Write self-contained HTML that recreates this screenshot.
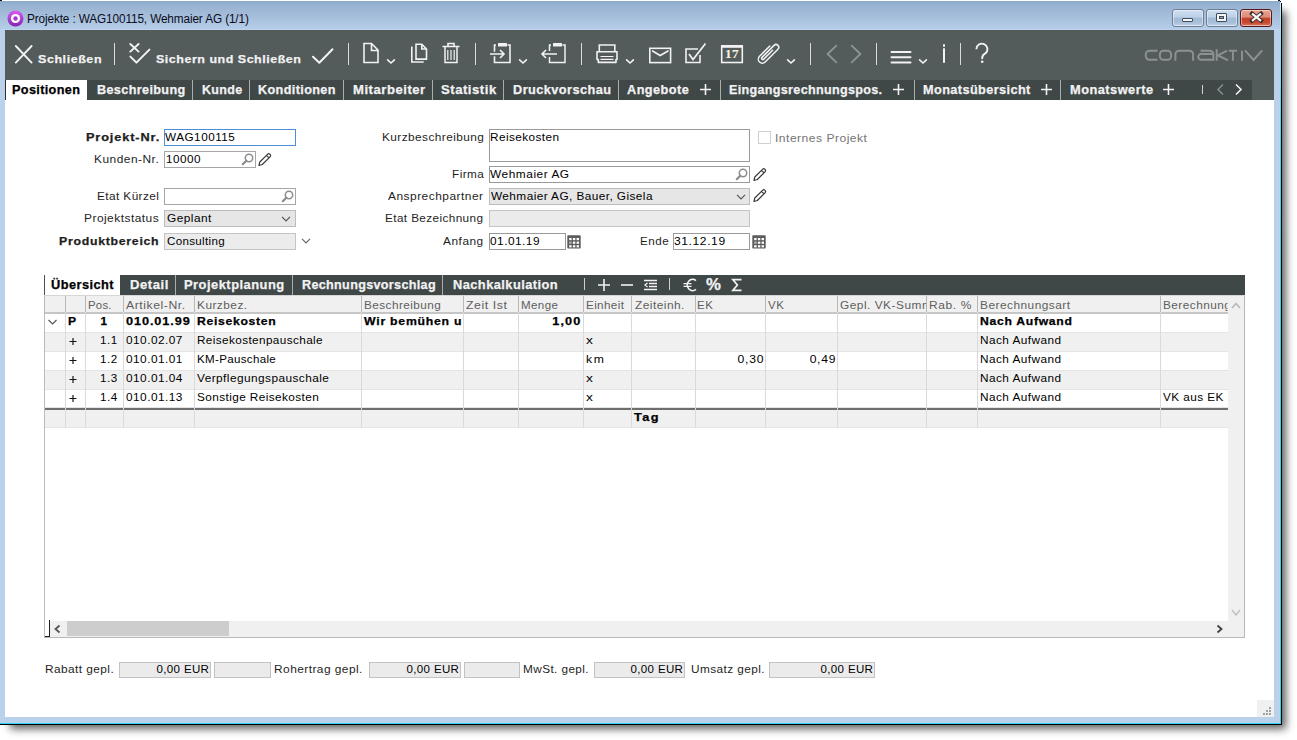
<!DOCTYPE html>
<html><head><meta charset="utf-8"><style>
html,body{margin:0;padding:0;}
body{width:1297px;height:740px;position:relative;overflow:hidden;background:#fff;font-family:"Liberation Sans",sans-serif;}
.r{position:absolute;display:block;}
.t{position:absolute;white-space:nowrap;}
</style></head><body>
<div class="r" style="left:0px;top:1px;width:1282px;height:724px;background:#b9d1ea;box-shadow:7px 7px 8px -3px rgba(0,0,0,.62);"></div>
<div class="r" style="left:1281px;top:1px;width:1px;height:724px;background:#000"></div>
<div class="r" style="left:0px;top:724px;width:1282px;height:1px;background:#000"></div>
<div class="r" style="left:1280px;top:1px;width:1px;height:723px;background:linear-gradient(#c4eef8 0px,#8ee0f6 30px,#45d6f5 120px,#2fd3f3 300px)"></div>
<div class="r" style="left:0px;top:723px;width:1281px;height:1px;background:#2fd3f3"></div>
<div class="r" style="left:0px;top:1px;width:1280px;height:29px;background:linear-gradient(#8ba7c7 0px,#95b0cf 2px,#a3bcd9 14px,#b5cde8 28px,#c3d9ef 29px)"></div>
<div class="r" style="left:0px;top:0px;width:2px;height:1px;background:#111"></div>
<div class="r" style="left:1281px;top:1px;width:1px;height:2px;background:#fff"></div>
<div class="r" style="left:1278px;top:0px;width:2px;height:1px;background:#111"></div>
<div class="r" style="left:1280px;top:1px;width:1px;height:1px;background:#111"></div>
<svg class="r" style="left:7px;top:10px;" width="17" height="17" viewBox="0 0 17 17"><defs><linearGradient id="gi" x1="0" y1="0" x2="0" y2="1"><stop offset="0" stop-color="#d65cf2"/><stop offset="1" stop-color="#8a22b0"/></linearGradient></defs><circle cx="8.5" cy="8.5" r="8" fill="url(#gi)"/><circle cx="8.5" cy="8.5" r="4.6" fill="#fff"/><circle cx="8.5" cy="8.5" r="2.2" fill="#a838c8"/></svg>
<div class="t" style="top:12.84px;font-size:12px;line-height:12px;letter-spacing:-0.116px;color:#0b0b20;left:26.50px;transform-origin:0 0;transform:scaleX(0.9812);">Projekte : WAG100115, Wehmaier AG (1/1)</div>
<div class="r" style="left:1172px;top:9px;width:30px;height:16px;border:1px solid #6d7f96;border-radius:3px;background:linear-gradient(#cfdff0 0%,#bcd0e6 45%,#a2bbd6 50%,#a8c0da 80%,#c4d6ea 100%);box-shadow:inset 0 0 0 1px rgba(255,255,255,.45)"></div>
<div class="r" style="left:1206px;top:9px;width:30px;height:16px;border:1px solid #6d7f96;border-radius:3px;background:linear-gradient(#cfdff0 0%,#bcd0e6 45%,#a2bbd6 50%,#a8c0da 80%,#c4d6ea 100%);box-shadow:inset 0 0 0 1px rgba(255,255,255,.45)"></div>
<div class="r" style="left:1240px;top:9px;width:30px;height:16px;border:1px solid #5a1a1a;border-radius:3px;background:linear-gradient(#e8a594 0%,#dd8c78 45%,#c2412a 50%,#c94a30 80%,#d9806a 100%);box-shadow:inset 0 0 0 1px rgba(255,255,255,.45)"></div>
<div class="r" style="left:1182px;top:18px;width:11px;height:4px;background:#f4f6f8;border:1px solid #404a58;box-sizing:border-box;border-radius:1px"></div>
<div class="r" style="left:1216px;top:13px;width:11px;height:9px;background:#f4f6f8;border:1px solid #404a58;box-sizing:border-box;border-radius:1px"></div>
<div class="r" style="left:1219px;top:16px;width:5px;height:3px;background:#8da6c2;border:1px solid #404a58;box-sizing:border-box"></div>
<svg class="r" style="left:1249px;top:11px;" width="15" height="13" viewBox="0 0 15 13"><path d="M3 2.6 L12 9.8 M12 2.6 L3 9.8" stroke="#3a2a2a" stroke-width="4" stroke-linecap="square"/><path d="M3 2.6 L12 9.8 M12 2.6 L3 9.8" stroke="#fafafa" stroke-width="2.3" stroke-linecap="butt"/></svg>
<div class="r" style="left:5px;top:30px;width:1269px;height:50px;background:#535b5b"></div>
<div class="r" style="left:5px;top:80px;width:1247px;height:20px;background:#3f4747"></div>
<div class="r" style="left:1252px;top:80px;width:22px;height:20px;background:#535b5b"></div>
<div class="r" style="left:5px;top:100px;width:1269px;height:617px;background:#fff"></div>
<svg class="r" style="left:14px;top:44px;" width="20" height="21" viewBox="0 0 20 21"><path d="M1.8 2 L17.6 18.6 M17.6 2 L1.8 18.6" stroke="#f2f2f2" stroke-width="1.9" fill="none" stroke-linecap="round"/></svg>
<div class="t" style="top:54.07px;font-size:11.5px;line-height:11.5px;font-weight:bold;-webkit-text-stroke:0.25px #f2f2f2;letter-spacing:0.529px;color:#f2f2f2;left:37.50px;transform-origin:0 0;transform:scaleX(1.0845);">Schließen</div>
<div class="r" style="left:114px;top:43px;width:1px;height:22px;background:#d8dcdc"></div>
<svg class="r" style="left:128px;top:42px;" width="24" height="23" viewBox="0 0 24 23"><path d="M2.3 2 L10.6 9.6 M10.6 2 L2.3 9.6" stroke="#f2f2f2" stroke-width="1.9" fill="none" stroke-linecap="round"/><path d="M2.4 14.6 L8.4 20.6 L21.4 7.6" stroke="#f2f2f2" stroke-width="2" fill="none" stroke-linecap="round" stroke-linejoin="round"/></svg>
<div class="t" style="top:54.07px;font-size:11.5px;line-height:11.5px;font-weight:bold;-webkit-text-stroke:0.25px #f2f2f2;letter-spacing:0.483px;color:#f2f2f2;left:155.50px;transform-origin:0 0;transform:scaleX(1.0844);">Sichern und Schließen</div>
<svg class="r" style="left:311px;top:47px;" width="24" height="18" viewBox="0 0 24 18"><path d="M2 9.7 L8.3 15.7 L21.5 2.3" stroke="#f2f2f2" stroke-width="2" fill="none" stroke-linecap="round" stroke-linejoin="round"/></svg>
<div class="r" style="left:348px;top:43px;width:1px;height:22px;background:#d8dcdc"></div>
<svg class="r" style="left:362px;top:42px;" width="18" height="23" viewBox="0 0 18 23"><path d="M2 1.5 H9.5 L16 8 V20.5 H2 Z M9.5 1.5 V8.5 H16" stroke="#f2f2f2" stroke-width="1.6" fill="none" stroke-linejoin="miter"/></svg>
<svg class="r" style="left:386px;top:58px;" width="10" height="7" viewBox="0 0 10 7"><path d="M1.6 1.8 L5 5 L8.4 1.8" stroke="#f2f2f2" stroke-width="1.6" fill="none" stroke-linecap="round"/></svg>
<svg class="r" style="left:408px;top:42px;" width="22" height="23" viewBox="0 0 22 23"><path d="M8 2.3 H13.8 L18.5 7 V17.1 H8 Z M13.8 2.3 V7 H18.5" stroke="#f2f2f2" stroke-width="1.6" fill="none"/><path d="M3.8 4.5 V20 H15.7" stroke="#f2f2f2" stroke-width="1.6" fill="none"/></svg>
<svg class="r" style="left:441px;top:42px;" width="20" height="23" viewBox="0 0 20 23"><path d="M1.5 4.5 H18.5 M7 4.5 V1.5 H13 V4.5" stroke="#f2f2f2" stroke-width="1.6" fill="none"/><path d="M4 5 V20.5 H16 V5" stroke="#f2f2f2" stroke-width="1.5" fill="none"/><path d="M6.8 8 V18 M10 8 V18 M13.2 8 V18" stroke="#f2f2f2" stroke-width="1.2" fill="none"/></svg>
<div class="r" style="left:475px;top:43px;width:1px;height:22px;background:#d8dcdc"></div>
<svg class="r" style="left:489px;top:42px;" width="24" height="23" viewBox="0 0 24 23"><path d="M7 3 H5.5 V9.8 M5.5 14.2 V20.5 H21 V3 H18.5" stroke="#f2f2f2" stroke-width="1.6" fill="none"/><rect x="9" y="1" width="9" height="3.5" rx="0.5" fill="#f2f2f2"/><path d="M1 12 H15 M11 8 L15 12 L11 16" stroke="#f2f2f2" stroke-width="1.6" fill="none"/></svg>
<svg class="r" style="left:518px;top:58px;" width="10" height="7" viewBox="0 0 10 7"><path d="M1.6 1.8 L5 5 L8.4 1.8" stroke="#f2f2f2" stroke-width="1.6" fill="none" stroke-linecap="round"/></svg>
<svg class="r" style="left:540px;top:42px;" width="27" height="23" viewBox="0 0 27 23"><path d="M11 3 H9.5 V9 M9.5 15 V20.5 H25 V3 H22.5" stroke="#f2f2f2" stroke-width="1.5" fill="none"/><rect x="13" y="1" width="9" height="3.5" rx="0.5" fill="#f2f2f2"/><path d="M17 12 H2 M6 8 L2 12 L6 16" stroke="#f2f2f2" stroke-width="1.6" fill="none"/></svg>
<div class="r" style="left:581px;top:43px;width:1px;height:22px;background:#d8dcdc"></div>
<svg class="r" style="left:595px;top:42px;" width="25" height="23" viewBox="0 0 25 23"><path d="M4.3 10 V3 H19.8 V10" stroke="#f2f2f2" stroke-width="1.6" fill="none"/><path d="M2 9.8 H22 V17.5 H21 V20.4 H3.3 V17.5 H2 Z" stroke="#f2f2f2" stroke-width="1.6" fill="none" stroke-linejoin="round"/><path d="M5.5 14.5 H18.5 M5.5 17.4 H18.5" stroke="#f2f2f2" stroke-width="1.2"/></svg>
<svg class="r" style="left:625px;top:58px;" width="10" height="7" viewBox="0 0 10 7"><path d="M1.6 1.8 L5 5 L8.4 1.8" stroke="#f2f2f2" stroke-width="1.6" fill="none" stroke-linecap="round"/></svg>
<svg class="r" style="left:648px;top:46px;" width="24" height="19" viewBox="0 0 24 19"><rect x="1.8" y="2.3" width="20.8" height="14.3" stroke="#f2f2f2" stroke-width="1.6" fill="none"/><path d="M4.5 5 L12.2 9.5 L20 5" stroke="#f2f2f2" stroke-width="1.6" fill="none" stroke-linecap="round"/></svg>
<svg class="r" style="left:684px;top:42px;" width="24" height="23" viewBox="0 0 24 23"><path d="M14 7 H2 V20.5 H16 V13" stroke="#f2f2f2" stroke-width="1.6" fill="none"/><path d="M5 12 L9 17.5 L21.5 1.5" stroke="#f2f2f2" stroke-width="1.7" fill="none"/></svg>
<svg class="r" style="left:720px;top:44px;" width="24" height="21" viewBox="0 0 24 21"><rect x="1.7" y="1.8" width="20.6" height="16.7" stroke="#f2f2f2" stroke-width="1.6" fill="none"/><rect x="1" y="1" width="22" height="2.8" fill="#f2f2f2"/><text x="11.7" y="13.9" text-anchor="middle" font-family="Liberation Serif" font-weight="bold" font-size="12.5" fill="#f6f0dc" textLength="14" lengthAdjust="spacingAndGlyphs">17</text></svg>
<svg class="r" style="left:755px;top:42px;" width="26" height="23" viewBox="0 0 26 23"><g transform="translate(13.3 11.2) rotate(45) translate(-4 -13.6)"><path d="M5 8.5 V21 A1.25 1.25 0 0 1 2.5 21 V4 A2.75 2.75 0 0 1 8 4 V22 A4 4 0 0 1 0 22 V7.5" stroke="#f2f2f2" stroke-width="1.5" fill="none" stroke-linecap="round"/></g></svg>
<svg class="r" style="left:786px;top:58px;" width="10" height="7" viewBox="0 0 10 7"><path d="M1.6 1.8 L5 5 L8.4 1.8" stroke="#f2f2f2" stroke-width="1.6" fill="none" stroke-linecap="round"/></svg>
<div class="r" style="left:810px;top:43px;width:1px;height:22px;background:#d8dcdc"></div>
<svg class="r" style="left:825px;top:44px;" width="14" height="20" viewBox="0 0 14 20"><path d="M11.3 1.6 L2.6 10 L11.3 18.4" stroke="#8d9595" stroke-width="1.8" fill="none" stroke-linecap="round"/></svg>
<svg class="r" style="left:849px;top:44px;" width="14" height="20" viewBox="0 0 14 20"><path d="M2.7 1.6 L11.4 10 L2.7 18.4" stroke="#8d9595" stroke-width="1.8" fill="none" stroke-linecap="round"/></svg>
<div class="r" style="left:876px;top:43px;width:1px;height:22px;background:#d8dcdc"></div>
<svg class="r" style="left:890px;top:49px;" width="22" height="16" viewBox="0 0 22 16"><path d="M1.5 3 H20.5 M1.5 8.2 H20.5 M1.5 13.4 H20.5" stroke="#f2f2f2" stroke-width="2" fill="none" stroke-linecap="round"/></svg>
<svg class="r" style="left:918px;top:58px;" width="10" height="7" viewBox="0 0 10 7"><path d="M1.6 1.8 L5 5 L8.4 1.8" stroke="#f2f2f2" stroke-width="1.6" fill="none" stroke-linecap="round"/></svg>
<div class="r" style="left:942.5px;top:44px;width:2.0px;height:2.5px;background:#f2f2f2;border-radius:1px"></div>
<div class="r" style="left:942.5px;top:48px;width:2.0px;height:15px;background:#f2f2f2;border-radius:1px"></div>
<div class="r" style="left:960px;top:43px;width:1px;height:22px;background:#d8dcdc"></div>
<svg class="r" style="left:973px;top:42px;" width="18" height="22" viewBox="0 0 18 22"><path d="M3.4 7.2 A5.5 5.5 0 1 1 12.6 11.2 Q9.2 13 9.2 16 V17" stroke="#f2f2f2" stroke-width="1.9" fill="none"/><circle cx="9.2" cy="19.8" r="1.3" fill="#f2f2f2"/></svg>
<svg class="r" style="left:1140px;top:44px;" width="126" height="22" viewBox="0 0 126 22"><g stroke="#8c9292" stroke-width="1.95" fill="none"><path d="M17.5 6.7 H9.6 A3.8 3.8 0 0 0 5.8 10.5 V12 A3.8 3.8 0 0 0 9.6 15.8 H17.5"/><rect x="19.9" y="6.7" width="11.2" height="9.1" rx="3.6"/><path d="M35.4 16.7 V10.5 A3.8 3.8 0 0 1 39.2 6.7 H49.3 A3.8 3.8 0 0 1 53.1 10.5 V16.7"/><path d="M60.5 6.7 H69.6 A3.8 3.8 0 0 1 73.4 10.5 V15.8 H62 A3.6 3.6 0 0 1 58.2 12.8 A3.2 3.2 0 0 1 62 9.9 H73.4"/><path d="M76.7 5.2 V16.7 M87 6.6 L78 11.4 L88 16.4"/><path d="M88.8 6.7 H97 M92.9 6.7 V16.7"/><path d="M102 6.7 V16.7"/><path d="M105 6.4 L113.6 16 L122.2 6.4"/></g></svg>
<div class="r" style="left:6px;top:80px;width:81px;height:20px;background:#fff"></div>
<div class="r" style="left:5px;top:80px;width:1px;height:20px;background:#2b3131"></div>
<div class="t" style="top:83.84px;font-size:12px;line-height:12px;font-weight:bold;-webkit-text-stroke:0.25px #000;letter-spacing:0.346px;color:#000;left:12.00px;transform-origin:0 0;transform:scaleX(1.0535);">Positionen</div>
<div class="t" style="top:83.84px;font-size:12px;line-height:12px;font-weight:bold;-webkit-text-stroke:0.25px #f2f2f2;letter-spacing:0.354px;color:#f2f2f2;left:96.50px;transform-origin:0 0;transform:scaleX(1.0511);">Beschreibung</div>
<div class="t" style="top:83.84px;font-size:12px;line-height:12px;font-weight:bold;-webkit-text-stroke:0.25px #f2f2f2;letter-spacing:0.345px;color:#f2f2f2;left:201.80px;transform-origin:0 0;transform:scaleX(1.0384);">Kunde</div>
<div class="t" style="top:83.84px;font-size:12px;line-height:12px;font-weight:bold;-webkit-text-stroke:0.25px #f2f2f2;letter-spacing:0.357px;color:#f2f2f2;left:258.10px;transform-origin:0 0;transform:scaleX(1.0537);">Konditionen</div>
<div class="t" style="top:83.84px;font-size:12px;line-height:12px;font-weight:bold;-webkit-text-stroke:0.25px #f2f2f2;letter-spacing:0.498px;color:#f2f2f2;left:352.50px;transform-origin:0 0;transform:scaleX(1.0884);">Mitarbeiter</div>
<div class="t" style="top:83.84px;font-size:12px;line-height:12px;font-weight:bold;-webkit-text-stroke:0.25px #f2f2f2;letter-spacing:0.488px;color:#f2f2f2;left:441.10px;transform-origin:0 0;transform:scaleX(1.0912);">Statistik</div>
<div class="t" style="top:83.84px;font-size:12px;line-height:12px;font-weight:bold;-webkit-text-stroke:0.25px #f2f2f2;letter-spacing:0.417px;color:#f2f2f2;left:512.50px;transform-origin:0 0;transform:scaleX(1.0608);">Druckvorschau</div>
<div class="t" style="top:83.84px;font-size:12px;line-height:12px;font-weight:bold;-webkit-text-stroke:0.25px #f2f2f2;letter-spacing:0.436px;color:#f2f2f2;left:627.40px;transform-origin:0 0;transform:scaleX(1.0584);">Angebote</div>
<div class="t" style="top:83.84px;font-size:12px;line-height:12px;font-weight:bold;-webkit-text-stroke:0.25px #f2f2f2;letter-spacing:0.310px;color:#f2f2f2;left:729.40px;transform-origin:0 0;transform:scaleX(1.0464);">Eingangsrechnungspos.</div>
<div class="t" style="top:83.84px;font-size:12px;line-height:12px;font-weight:bold;-webkit-text-stroke:0.25px #f2f2f2;letter-spacing:0.381px;color:#f2f2f2;left:922.90px;transform-origin:0 0;transform:scaleX(1.0588);">Monatsübersicht</div>
<div class="t" style="top:83.84px;font-size:12px;line-height:12px;font-weight:bold;-webkit-text-stroke:0.25px #f2f2f2;letter-spacing:0.453px;color:#f2f2f2;left:1070.00px;transform-origin:0 0;transform:scaleX(1.0658);">Monatswerte</div>
<div class="r" style="left:192px;top:80px;width:1px;height:20px;background:#a8acac"></div>
<div class="r" style="left:249px;top:80px;width:1px;height:20px;background:#a8acac"></div>
<div class="r" style="left:343px;top:80px;width:1px;height:20px;background:#a8acac"></div>
<div class="r" style="left:432px;top:80px;width:1px;height:20px;background:#a8acac"></div>
<div class="r" style="left:503px;top:80px;width:1px;height:20px;background:#a8acac"></div>
<div class="r" style="left:618px;top:80px;width:1px;height:20px;background:#a8acac"></div>
<div class="r" style="left:720px;top:80px;width:1px;height:20px;background:#a8acac"></div>
<div class="r" style="left:914px;top:80px;width:1px;height:20px;background:#a8acac"></div>
<div class="r" style="left:1060px;top:80px;width:1px;height:20px;background:#a8acac"></div>
<svg class="r" style="left:699px;top:83px;" width="13" height="13" viewBox="0 0 13 13"><path d="M6.5 1 V12 M1 6.5 H12" stroke="#f2f2f2" stroke-width="1.6"/></svg>
<svg class="r" style="left:892px;top:83px;" width="13" height="13" viewBox="0 0 13 13"><path d="M6.5 1 V12 M1 6.5 H12" stroke="#f2f2f2" stroke-width="1.6"/></svg>
<svg class="r" style="left:1040px;top:83px;" width="13" height="13" viewBox="0 0 13 13"><path d="M6.5 1 V12 M1 6.5 H12" stroke="#f2f2f2" stroke-width="1.6"/></svg>
<svg class="r" style="left:1162px;top:83px;" width="13" height="13" viewBox="0 0 13 13"><path d="M6.5 1 V12 M1 6.5 H12" stroke="#f2f2f2" stroke-width="1.6"/></svg>
<div class="r" style="left:1202px;top:85px;width:1px;height:9px;background:#d0d0d0"></div>
<svg class="r" style="left:1215px;top:83px;" width="10" height="13" viewBox="0 0 10 13"><path d="M8 1.5 L3 6.5 L8 11.5" stroke="#888e8e" stroke-width="1.5" fill="none"/></svg>
<svg class="r" style="left:1234px;top:83px;" width="10" height="13" viewBox="0 0 10 13"><path d="M2 1.5 L7 6.5 L2 11.5" stroke="#f2f2f2" stroke-width="1.6" fill="none"/></svg>
<div class="t" style="top:131.69px;font-size:11px;line-height:11px;font-weight:bold;-webkit-text-stroke:0.25px #1e1e1e;letter-spacing:0.759px;color:#1e1e1e;left:85.50px;transform-origin:0 0;transform:scaleX(1.1579);">Projekt-Nr.</div>
<div class="t" style="top:153.69px;font-size:11px;line-height:11px;letter-spacing:0.465px;color:#1e1e1e;left:94.00px;transform-origin:0 0;transform:scaleX(1.0813);">Kunden-Nr.</div>
<div class="t" style="top:190.69px;font-size:11px;line-height:11px;letter-spacing:0.376px;color:#1e1e1e;left:96.90px;transform-origin:0 0;transform:scaleX(1.0752);">Etat Kürzel</div>
<div class="t" style="top:212.69px;font-size:11px;line-height:11px;letter-spacing:0.426px;color:#1e1e1e;left:84.10px;transform-origin:0 0;transform:scaleX(1.0874);">Projektstatus</div>
<div class="t" style="top:235.69px;font-size:11px;line-height:11px;font-weight:bold;-webkit-text-stroke:0.25px #1e1e1e;letter-spacing:0.651px;color:#1e1e1e;left:59.20px;transform-origin:0 0;transform:scaleX(1.1172);">Produktbereich</div>
<div class="r" style="left:164px;top:129px;width:132px;height:17px;background:#fff;border:1px solid #4a8fd8;box-sizing:border-box"></div>
<div class="t" style="top:131.69px;font-size:11px;line-height:11px;letter-spacing:0.477px;color:#000;left:165.00px;transform-origin:0 0;transform:scaleX(1.0659);">WAG100115</div>
<div class="r" style="left:164px;top:151px;width:92px;height:17px;background:#fff;border:1px solid #a6a6a6;box-sizing:border-box"></div>
<div class="t" style="top:153.69px;font-size:11px;line-height:11px;letter-spacing:0.459px;color:#000;left:165.50px;transform-origin:0 0;transform:scaleX(1.0639);">10000</div>
<svg class="r" style="left:241px;top:153px;" width="13" height="13" viewBox="0 0 13 13"><circle cx="8" cy="5" r="3.7" stroke="#8c8c8c" stroke-width="1.5" fill="none"/><path d="M5.3 7.7 L1.8 11.2" stroke="#8c8c8c" stroke-width="2.2" stroke-linecap="round"/></svg>
<svg class="r" style="left:257px;top:153px;" width="15" height="14" viewBox="0 0 15 14"><path d="M2 12.5 L2.8 9 L10.5 1.3 A1.6 1.6 0 0 1 13 3.8 L5.3 11.5 Z M9.5 2.3 L12 4.8" stroke="#3a3a3a" stroke-width="1.2" fill="none" stroke-linejoin="round"/></svg>
<div class="r" style="left:164px;top:188px;width:132px;height:17px;background:#fff;border:1px solid #a6a6a6;box-sizing:border-box"></div>
<svg class="r" style="left:281px;top:190px;" width="13" height="13" viewBox="0 0 13 13"><circle cx="8" cy="5" r="3.7" stroke="#8c8c8c" stroke-width="1.5" fill="none"/><path d="M5.3 7.7 L1.8 11.2" stroke="#8c8c8c" stroke-width="2.2" stroke-linecap="round"/></svg>
<div class="r" style="left:164px;top:210px;width:132px;height:17px;background:#e6e6e6;border:1px solid #bcbcbc;box-sizing:border-box"></div>
<div class="t" style="top:212.69px;font-size:11px;line-height:11px;letter-spacing:0.455px;color:#000;left:166.70px;transform-origin:0 0;transform:scaleX(1.0762);">Geplant</div>
<svg class="r" style="left:281px;top:216px;" width="10" height="6" viewBox="0 0 10 6"><path d="M1 0.8 L5 4.8 L9 0.8" stroke="#555" stroke-width="1.2" fill="none"/></svg>
<div class="r" style="left:164px;top:233px;width:132px;height:17px;background:#ececec;border:1px solid #c4c4c4;box-sizing:border-box"></div>
<div class="t" style="top:235.69px;font-size:11px;line-height:11px;letter-spacing:0.296px;color:#000;left:166.70px;transform-origin:0 0;transform:scaleX(1.0541);">Consulting</div>
<svg class="r" style="left:301px;top:238px;" width="10" height="6" viewBox="0 0 10 6"><path d="M1 0.8 L5 4.8 L9 0.8" stroke="#666" stroke-width="1.2" fill="none"/></svg>
<div class="t" style="top:131.69px;font-size:11px;line-height:11px;letter-spacing:0.410px;color:#1e1e1e;left:381.50px;transform-origin:0 0;transform:scaleX(1.0746);">Kurzbeschreibung</div>
<div class="t" style="top:168.69px;font-size:11px;line-height:11px;letter-spacing:0.444px;color:#1e1e1e;left:451.50px;transform-origin:0 0;transform:scaleX(1.0674);">Firma</div>
<div class="t" style="top:190.69px;font-size:11px;line-height:11px;letter-spacing:0.450px;color:#1e1e1e;left:388.40px;transform-origin:0 0;transform:scaleX(1.0841);">Ansprechpartner</div>
<div class="t" style="top:212.69px;font-size:11px;line-height:11px;letter-spacing:0.367px;color:#1e1e1e;left:385.40px;transform-origin:0 0;transform:scaleX(1.0682);">Etat Bezeichnung</div>
<div class="t" style="top:235.69px;font-size:11px;line-height:11px;letter-spacing:0.496px;color:#1e1e1e;left:443.20px;transform-origin:0 0;transform:scaleX(1.0765);">Anfang</div>
<div class="t" style="top:235.69px;font-size:11px;line-height:11px;letter-spacing:0.459px;color:#1e1e1e;left:640.00px;transform-origin:0 0;transform:scaleX(1.0566);">Ende</div>
<div class="r" style="left:489px;top:129px;width:261px;height:33px;background:#fff;border:1px solid #9a9a9a;box-sizing:border-box"></div>
<div class="t" style="top:131.69px;font-size:11px;line-height:11px;letter-spacing:0.400px;color:#000;left:489.50px;transform-origin:0 0;transform:scaleX(1.0708);">Reisekosten</div>
<div class="r" style="left:489px;top:166px;width:261px;height:17px;background:#fff;border:1px solid #9a9a9a;box-sizing:border-box"></div>
<div class="t" style="top:168.69px;font-size:11px;line-height:11px;letter-spacing:0.502px;color:#000;left:489.50px;transform-origin:0 0;transform:scaleX(1.0793);">Wehmaier AG</div>
<svg class="r" style="left:735px;top:168px;" width="13" height="13" viewBox="0 0 13 13"><circle cx="8" cy="5" r="3.7" stroke="#8c8c8c" stroke-width="1.5" fill="none"/><path d="M5.3 7.7 L1.8 11.2" stroke="#8c8c8c" stroke-width="2.2" stroke-linecap="round"/></svg>
<svg class="r" style="left:752px;top:168px;" width="15" height="14" viewBox="0 0 15 14"><path d="M2 12.5 L2.8 9 L10.5 1.3 A1.6 1.6 0 0 1 13 3.8 L5.3 11.5 Z M9.5 2.3 L12 4.8" stroke="#3a3a3a" stroke-width="1.2" fill="none" stroke-linejoin="round"/></svg>
<div class="r" style="left:489px;top:188px;width:261px;height:17px;background:#e6e6e6;border:1px solid #bcbcbc;box-sizing:border-box"></div>
<div class="t" style="top:190.69px;font-size:11px;line-height:11px;letter-spacing:0.392px;color:#000;left:490.90px;transform-origin:0 0;transform:scaleX(1.0751);">Wehmaier AG, Bauer, Gisela</div>
<svg class="r" style="left:736px;top:194px;" width="10" height="6" viewBox="0 0 10 6"><path d="M1 0.8 L5 4.8 L9 0.8" stroke="#555" stroke-width="1.2" fill="none"/></svg>
<svg class="r" style="left:752px;top:189px;" width="15" height="14" viewBox="0 0 15 14"><path d="M2 12.5 L2.8 9 L10.5 1.3 A1.6 1.6 0 0 1 13 3.8 L5.3 11.5 Z M9.5 2.3 L12 4.8" stroke="#3a3a3a" stroke-width="1.2" fill="none" stroke-linejoin="round"/></svg>
<div class="r" style="left:489px;top:210px;width:261px;height:17px;background:#ebebeb;border:1px solid #c4c4c4;box-sizing:border-box"></div>
<div class="r" style="left:489px;top:233px;width:77px;height:17px;background:#fff;border:1px solid #9a9a9a;box-sizing:border-box"></div>
<div class="t" style="top:235.69px;font-size:11px;line-height:11px;letter-spacing:0.443px;color:#000;left:489.50px;transform-origin:0 0;transform:scaleX(1.0780);">01.01.19</div>
<svg class="r" style="left:567px;top:235px;" width="14" height="14" viewBox="0 0 14 14"><rect x="0.3" y="0.2" width="13.4" height="13.4" rx="0.8" fill="#5c5c5c"/><rect x="2.2" y="3" width="2.4" height="2.2" fill="#fff"/><rect x="5.9" y="3" width="2.4" height="2.2" fill="#fff"/><rect x="9.6" y="3" width="2.4" height="2.2" fill="#fff"/><rect x="2.2" y="6.6" width="2.4" height="2.2" fill="#b8b8b8"/><rect x="5.9" y="6.6" width="2.4" height="2.2" fill="#fff"/><rect x="9.6" y="6.6" width="2.4" height="2.2" fill="#fff"/><rect x="2.2" y="10.2" width="2.4" height="2.2" fill="#fff"/><rect x="5.9" y="10.2" width="2.4" height="2.2" fill="#fff"/><rect x="9.6" y="10.2" width="2.4" height="2.2" fill="#fff"/></svg>
<div class="r" style="left:673px;top:233px;width:77px;height:17px;background:#fff;border:1px solid #9a9a9a;box-sizing:border-box"></div>
<div class="t" style="top:235.69px;font-size:11px;line-height:11px;letter-spacing:0.539px;color:#000;left:673.50px;transform-origin:0 0;transform:scaleX(1.0967);">31.12.19</div>
<svg class="r" style="left:752px;top:235px;" width="14" height="14" viewBox="0 0 14 14"><rect x="0.3" y="0.2" width="13.4" height="13.4" rx="0.8" fill="#5c5c5c"/><rect x="2.2" y="3" width="2.4" height="2.2" fill="#fff"/><rect x="5.9" y="3" width="2.4" height="2.2" fill="#fff"/><rect x="9.6" y="3" width="2.4" height="2.2" fill="#fff"/><rect x="2.2" y="6.6" width="2.4" height="2.2" fill="#b8b8b8"/><rect x="5.9" y="6.6" width="2.4" height="2.2" fill="#fff"/><rect x="9.6" y="6.6" width="2.4" height="2.2" fill="#fff"/><rect x="2.2" y="10.2" width="2.4" height="2.2" fill="#fff"/><rect x="5.9" y="10.2" width="2.4" height="2.2" fill="#fff"/><rect x="9.6" y="10.2" width="2.4" height="2.2" fill="#fff"/></svg>
<div class="r" style="left:758px;top:131px;width:13px;height:13px;background:#fff;border:1px solid #cfcfcf;box-sizing:border-box"></div>
<div class="t" style="top:132.69px;font-size:11px;line-height:11px;letter-spacing:0.452px;color:#747474;left:774.50px;transform-origin:0 0;transform:scaleX(1.0964);">Internes Projekt</div>
<div class="r" style="left:44px;top:275px;width:1201px;height:20px;background:#3f4747"></div>
<div class="r" style="left:45px;top:275px;width:75px;height:20px;background:#fff"></div>
<div class="r" style="left:44px;top:275px;width:1px;height:20px;background:#4a4f4f"></div>
<div class="r" style="left:44px;top:295px;width:1201px;height:1px;background:#d6d6d6"></div>
<div class="t" style="top:279.34px;font-size:12px;line-height:12px;font-weight:bold;-webkit-text-stroke:0.25px #000;letter-spacing:0.425px;color:#000;left:50.50px;transform-origin:0 0;transform:scaleX(1.0655);">Übersicht</div>
<div class="t" style="top:279.34px;font-size:12px;line-height:12px;font-weight:bold;-webkit-text-stroke:0.25px #f2f2f2;letter-spacing:0.526px;color:#f2f2f2;left:129.70px;transform-origin:0 0;transform:scaleX(1.0875);">Detail</div>
<div class="t" style="top:279.34px;font-size:12px;line-height:12px;font-weight:bold;-webkit-text-stroke:0.25px #f2f2f2;letter-spacing:0.461px;color:#f2f2f2;left:184.40px;transform-origin:0 0;transform:scaleX(1.0736);">Projektplanung</div>
<div class="t" style="top:279.34px;font-size:12px;line-height:12px;font-weight:bold;-webkit-text-stroke:0.25px #f2f2f2;letter-spacing:0.325px;color:#f2f2f2;left:301.80px;transform-origin:0 0;transform:scaleX(1.0474);">Rechnungsvorschlag</div>
<div class="t" style="top:279.34px;font-size:12px;line-height:12px;font-weight:bold;-webkit-text-stroke:0.25px #f2f2f2;letter-spacing:0.420px;color:#f2f2f2;left:452.60px;transform-origin:0 0;transform:scaleX(1.0683);">Nachkalkulation</div>
<div class="r" style="left:175px;top:275px;width:1px;height:20px;background:#a8acac"></div>
<div class="r" style="left:292px;top:275px;width:1px;height:20px;background:#a8acac"></div>
<div class="r" style="left:442px;top:275px;width:1px;height:20px;background:#a8acac"></div>
<div class="r" style="left:584px;top:278px;width:1px;height:12px;background:#d0d0d0"></div>
<div class="r" style="left:669px;top:278px;width:1px;height:12px;background:#d0d0d0"></div>
<svg class="r" style="left:597px;top:278px;" width="14" height="14" viewBox="0 0 14 14"><path d="M7 1 V13 M1 7 H13" stroke="#f2f2f2" stroke-width="1.6"/></svg>
<svg class="r" style="left:620px;top:278px;" width="14" height="14" viewBox="0 0 14 14"><path d="M1 7 H13" stroke="#f2f2f2" stroke-width="1.6"/></svg>
<svg class="r" style="left:643px;top:278px;" width="15" height="14" viewBox="0 0 15 14"><path d="M1 2.5 H14 M6 5.5 H14 M6 8.5 H14 M1 11.5 H14 M4.5 5 L2 7 L4.5 9" stroke="#f2f2f2" stroke-width="1.3" fill="none"/></svg>
<svg class="r" style="left:682px;top:278px;" width="16" height="14" viewBox="0 0 16 14"><path d="M14 2.6 A5.4 5.6 0 1 0 14 11.4" stroke="#f2f2f2" stroke-width="1.7" fill="none"/><path d="M1.5 5.6 H9.5 M1.5 8.4 H9.5" stroke="#f2f2f2" stroke-width="1.3"/></svg>
<div class="t" style="top:276.96px;font-size:16px;line-height:16px;font-weight:bold;-webkit-text-stroke:0.25px #f2f2f2;color:#f2f2f2;left:705.50px;transform-origin:0 0;transform:scaleX(1.0474);">%</div>
<svg class="r" style="left:731px;top:278px;" width="12" height="14" viewBox="0 0 12 14"><path d="M10.5 1.6 H1.8 L6.4 7 L1.8 12.4 H10.5" stroke="#f2f2f2" stroke-width="1.7" fill="none"/></svg>
<div class="r" style="left:45px;top:296px;width:1199px;height:341px;background:#fff"></div>
<div class="r" style="left:1244px;top:296px;width:1px;height:342px;background:#b8b8b8"></div>
<div class="r" style="left:44px;top:296px;width:1px;height:342px;background:#bcbcbc"></div>
<div class="r" style="left:44px;top:637px;width:1201px;height:1px;background:#b8b8b8"></div>
<div class="r" style="left:45px;top:296px;width:1183px;height:16px;background:#f0f0f0"></div>
<div class="r" style="left:45px;top:312px;width:1183px;height:2px;background:#c6c6c6"></div>
<div class="r" style="left:45px;top:332px;width:1183px;height:1px;background:#e4e4e4"></div>
<div class="r" style="left:45px;top:333px;width:1183px;height:19px;background:#f0f0f0"></div>
<div class="r" style="left:45px;top:351px;width:1183px;height:1px;background:#e4e4e4"></div>
<div class="r" style="left:45px;top:370px;width:1183px;height:1px;background:#e4e4e4"></div>
<div class="r" style="left:45px;top:371px;width:1183px;height:19px;background:#f0f0f0"></div>
<div class="r" style="left:45px;top:389px;width:1183px;height:1px;background:#e4e4e4"></div>
<div class="r" style="left:45px;top:407px;width:1183px;height:1px;background:#e4e4e4"></div>
<div class="r" style="left:45px;top:408px;width:1183px;height:2px;background:#6e6e6e"></div>
<div class="r" style="left:45px;top:410px;width:1183px;height:18px;background:#f0f0f0"></div>
<div class="r" style="left:45px;top:427px;width:1183px;height:1px;background:#e4e4e4"></div>
<div class="r" style="left:65px;top:296px;width:1px;height:132px;background:#dadada"></div>
<div class="r" style="left:65px;top:296px;width:1px;height:16px;background:#b9b9b9"></div>
<div class="r" style="left:85px;top:296px;width:1px;height:132px;background:#dadada"></div>
<div class="r" style="left:85px;top:296px;width:1px;height:16px;background:#b9b9b9"></div>
<div class="r" style="left:123px;top:296px;width:1px;height:132px;background:#dadada"></div>
<div class="r" style="left:123px;top:296px;width:1px;height:16px;background:#b9b9b9"></div>
<div class="r" style="left:194px;top:296px;width:1px;height:132px;background:#dadada"></div>
<div class="r" style="left:194px;top:296px;width:1px;height:16px;background:#b9b9b9"></div>
<div class="r" style="left:361px;top:296px;width:1px;height:132px;background:#dadada"></div>
<div class="r" style="left:361px;top:296px;width:1px;height:16px;background:#b9b9b9"></div>
<div class="r" style="left:463px;top:296px;width:1px;height:132px;background:#dadada"></div>
<div class="r" style="left:463px;top:296px;width:1px;height:16px;background:#b9b9b9"></div>
<div class="r" style="left:518px;top:296px;width:1px;height:132px;background:#dadada"></div>
<div class="r" style="left:518px;top:296px;width:1px;height:16px;background:#b9b9b9"></div>
<div class="r" style="left:583px;top:296px;width:1px;height:132px;background:#dadada"></div>
<div class="r" style="left:583px;top:296px;width:1px;height:16px;background:#b9b9b9"></div>
<div class="r" style="left:631px;top:296px;width:1px;height:132px;background:#dadada"></div>
<div class="r" style="left:631px;top:296px;width:1px;height:16px;background:#b9b9b9"></div>
<div class="r" style="left:695px;top:296px;width:1px;height:132px;background:#dadada"></div>
<div class="r" style="left:695px;top:296px;width:1px;height:16px;background:#b9b9b9"></div>
<div class="r" style="left:765px;top:296px;width:1px;height:132px;background:#dadada"></div>
<div class="r" style="left:765px;top:296px;width:1px;height:16px;background:#b9b9b9"></div>
<div class="r" style="left:837px;top:296px;width:1px;height:132px;background:#dadada"></div>
<div class="r" style="left:837px;top:296px;width:1px;height:16px;background:#b9b9b9"></div>
<div class="r" style="left:926px;top:296px;width:1px;height:132px;background:#dadada"></div>
<div class="r" style="left:926px;top:296px;width:1px;height:16px;background:#b9b9b9"></div>
<div class="r" style="left:977px;top:296px;width:1px;height:132px;background:#dadada"></div>
<div class="r" style="left:977px;top:296px;width:1px;height:16px;background:#b9b9b9"></div>
<div class="r" style="left:1160px;top:296px;width:1px;height:132px;background:#dadada"></div>
<div class="r" style="left:1160px;top:296px;width:1px;height:16px;background:#b9b9b9"></div>
<div class="t" style="top:299.99px;font-size:11px;line-height:11px;letter-spacing:0.240px;color:#5e5e5e;left:88.20px;transform-origin:0 0;transform:scaleX(1.0338);">Pos.</div>
<div class="t" style="top:299.99px;font-size:11px;line-height:11px;letter-spacing:0.490px;color:#5e5e5e;left:125.50px;transform-origin:0 0;transform:scaleX(1.1131);">Artikel-Nr.</div>
<div class="t" style="top:299.99px;font-size:11px;line-height:11px;letter-spacing:0.444px;color:#5e5e5e;left:197.10px;transform-origin:0 0;transform:scaleX(1.0770);">Kurzbez.</div>
<div class="t" style="top:299.99px;font-size:11px;line-height:11px;letter-spacing:0.408px;color:#5e5e5e;left:363.50px;transform-origin:0 0;transform:scaleX(1.0716);">Beschreibung</div>
<div class="t" style="top:299.99px;font-size:11px;line-height:11px;letter-spacing:0.504px;color:#5e5e5e;left:465.70px;transform-origin:0 0;transform:scaleX(1.1196);">Zeit Ist</div>
<div class="t" style="top:299.99px;font-size:11px;line-height:11px;letter-spacing:0.389px;color:#5e5e5e;left:520.70px;transform-origin:0 0;transform:scaleX(1.0485);">Menge</div>
<div class="t" style="top:299.99px;font-size:11px;line-height:11px;letter-spacing:0.334px;color:#5e5e5e;left:585.50px;transform-origin:0 0;transform:scaleX(1.0634);">Einheit</div>
<div class="t" style="top:299.99px;font-size:11px;line-height:11px;letter-spacing:0.415px;color:#5e5e5e;left:634.70px;transform-origin:0 0;transform:scaleX(1.0854);">Zeiteinh.</div>
<div class="t" style="top:299.99px;font-size:11px;line-height:11px;letter-spacing:0.588px;color:#5e5e5e;left:697.40px;transform-origin:0 0;transform:scaleX(1.0417);">EK</div>
<div class="t" style="top:299.99px;font-size:11px;line-height:11px;letter-spacing:0.588px;color:#5e5e5e;left:768.10px;transform-origin:0 0;transform:scaleX(1.0417);">VK</div>
<div class="t" style="top:299.99px;font-size:11px;line-height:11px;letter-spacing:0.475px;color:#5e5e5e;left:840.20px;transform-origin:0 0;width:79.61px;overflow:hidden;height:15px;transform:scaleX(1.0778);">Gepl. VK-Summe</div>
<div class="t" style="top:299.99px;font-size:11px;line-height:11px;letter-spacing:0.582px;color:#5e5e5e;left:928.50px;transform-origin:0 0;transform:scaleX(1.0877);">Rab. %</div>
<div class="t" style="top:299.99px;font-size:11px;line-height:11px;letter-spacing:0.443px;color:#5e5e5e;left:980.10px;transform-origin:0 0;transform:scaleX(1.0801);">Berechnungsart</div>
<div class="t" style="top:299.99px;font-size:11px;line-height:11px;letter-spacing:0.419px;color:#5e5e5e;left:1163.00px;transform-origin:0 0;width:59.52px;overflow:hidden;height:15px;transform:scaleX(1.0753);">Berechnungsgrundlage</div>
<div class="r" style="left:1228px;top:296px;width:16px;height:324px;background:#f0f0f0"></div>
<svg class="r" style="left:1230px;top:301px;" width="12" height="9" viewBox="0 0 12 9"><path d="M2 7 L6 2.5 L10 7" stroke="#b8b8b8" stroke-width="1.6" fill="none"/></svg>
<svg class="r" style="left:1230px;top:608px;" width="12" height="9" viewBox="0 0 12 9"><path d="M2 2 L6 7 L10 2" stroke="#c0c0c0" stroke-width="1.5" fill="none"/></svg>
<div class="t" style="top:315.99px;font-size:11px;line-height:11px;font-weight:bold;-webkit-text-stroke:0.25px #000;color:#000;left:68.10px;transform-origin:0 0;transform:scaleX(1.1039);">P</div>
<div class="t" style="top:315.99px;font-size:11px;line-height:11px;font-weight:bold;-webkit-text-stroke:0.25px #000;color:#000;left:100.88px;width:6.12px;transform-origin:100% 0;transform:scaleX(1.0625);">1</div>
<div class="t" style="top:315.99px;font-size:11px;line-height:11px;font-weight:bold;-webkit-text-stroke:0.25px #000;letter-spacing:0.806px;color:#000;left:125.90px;transform-origin:0 0;transform:scaleX(1.1519);">010.01.99</div>
<div class="t" style="top:315.99px;font-size:11px;line-height:11px;font-weight:bold;-webkit-text-stroke:0.25px #000;letter-spacing:0.627px;color:#000;left:197.10px;transform-origin:0 0;transform:scaleX(1.1072);">Reisekosten</div>
<div class="t" style="top:315.99px;font-size:11px;line-height:11px;font-weight:bold;-webkit-text-stroke:0.25px #000;letter-spacing:0.679px;color:#000;left:364.10px;transform-origin:0 0;transform:scaleX(1.1144);">Wir bemühen u</div>
<div class="t" style="top:315.99px;font-size:11px;line-height:11px;font-weight:bold;-webkit-text-stroke:0.25px #000;letter-spacing:0.952px;color:#000;left:556.03px;width:24.27px;transform-origin:100% 0;transform:scaleX(1.1539);">1,00</div>
<div class="t" style="top:315.99px;font-size:11px;line-height:11px;font-weight:bold;-webkit-text-stroke:0.25px #000;letter-spacing:0.655px;color:#000;left:980.10px;transform-origin:0 0;transform:scaleX(1.1047);">Nach Aufwand</div>
<svg class="r" style="left:47px;top:319px;" width="11" height="7" viewBox="0 0 11 7"><path d="M1.5 1 L5.5 5 L9.5 1" stroke="#555" stroke-width="1.2" fill="none"/></svg>
<svg class="r" style="left:69px;top:337px;" width="8" height="8" viewBox="0 0 8 8"><path d="M4 1 V8 M0.5 4.5 H7.5" stroke="#111" stroke-width="1.15"/></svg>
<svg class="r" style="left:69px;top:356px;" width="8" height="8" viewBox="0 0 8 8"><path d="M4 1 V8 M0.5 4.5 H7.5" stroke="#111" stroke-width="1.15"/></svg>
<svg class="r" style="left:69px;top:375px;" width="8" height="8" viewBox="0 0 8 8"><path d="M4 1 V8 M0.5 4.5 H7.5" stroke="#111" stroke-width="1.15"/></svg>
<svg class="r" style="left:69px;top:394px;" width="8" height="8" viewBox="0 0 8 8"><path d="M4 1 V8 M0.5 4.5 H7.5" stroke="#111" stroke-width="1.15"/></svg>
<div class="t" style="top:334.99px;font-size:11px;line-height:11px;letter-spacing:0.404px;color:#000;left:101.40px;width:16.10px;transform-origin:100% 0;transform:scaleX(1.0559);">1.1</div>
<div class="t" style="top:334.99px;font-size:11px;line-height:11px;letter-spacing:0.433px;color:#000;left:125.90px;transform-origin:0 0;transform:scaleX(1.0762);">010.02.07</div>
<div class="t" style="top:334.99px;font-size:11px;line-height:11px;letter-spacing:0.368px;color:#000;left:197.10px;transform-origin:0 0;transform:scaleX(1.0674);">Reisekostenpauschale</div>
<div class="t" style="top:334.99px;font-size:11px;line-height:11px;color:#000;left:585.50px;transform-origin:0 0;transform:scaleX(1.2545);">x</div>
<div class="t" style="top:334.99px;font-size:11px;line-height:11px;letter-spacing:0.431px;color:#000;left:980.10px;transform-origin:0 0;transform:scaleX(1.0716);">Nach Aufwand</div>
<div class="t" style="top:353.99px;font-size:11px;line-height:11px;letter-spacing:0.404px;color:#000;left:101.40px;width:16.10px;transform-origin:100% 0;transform:scaleX(1.0559);">1.2</div>
<div class="t" style="top:353.99px;font-size:11px;line-height:11px;letter-spacing:0.433px;color:#000;left:125.90px;transform-origin:0 0;transform:scaleX(1.0762);">010.01.01</div>
<div class="t" style="top:353.99px;font-size:11px;line-height:11px;letter-spacing:0.310px;color:#000;left:197.10px;transform-origin:0 0;transform:scaleX(1.0501);">KM-Pauschale</div>
<div class="t" style="top:353.99px;font-size:11px;line-height:11px;letter-spacing:1.457px;color:#000;left:585.50px;transform-origin:0 0;transform:scaleX(1.1104);">km</div>
<div class="t" style="top:353.99px;font-size:11px;line-height:11px;letter-spacing:0.677px;color:#000;left:740.26px;width:23.44px;transform-origin:100% 0;transform:scaleX(1.1049);">0,30</div>
<div class="t" style="top:353.99px;font-size:11px;line-height:11px;letter-spacing:0.650px;color:#000;left:812.04px;width:23.36px;transform-origin:100% 0;transform:scaleX(1.1002);">0,49</div>
<div class="t" style="top:353.99px;font-size:11px;line-height:11px;letter-spacing:0.431px;color:#000;left:980.10px;transform-origin:0 0;transform:scaleX(1.0716);">Nach Aufwand</div>
<div class="t" style="top:372.99px;font-size:11px;line-height:11px;letter-spacing:0.404px;color:#000;left:101.40px;width:16.10px;transform-origin:100% 0;transform:scaleX(1.0559);">1.3</div>
<div class="t" style="top:372.99px;font-size:11px;line-height:11px;letter-spacing:0.433px;color:#000;left:125.90px;transform-origin:0 0;transform:scaleX(1.0762);">010.01.04</div>
<div class="t" style="top:372.99px;font-size:11px;line-height:11px;letter-spacing:0.407px;color:#000;left:197.10px;transform-origin:0 0;transform:scaleX(1.0766);">Verpflegungspauschale</div>
<div class="t" style="top:372.99px;font-size:11px;line-height:11px;color:#000;left:585.50px;transform-origin:0 0;transform:scaleX(1.2545);">x</div>
<div class="t" style="top:372.99px;font-size:11px;line-height:11px;letter-spacing:0.431px;color:#000;left:980.10px;transform-origin:0 0;transform:scaleX(1.0716);">Nach Aufwand</div>
<div class="t" style="top:391.99px;font-size:11px;line-height:11px;letter-spacing:0.404px;color:#000;left:101.40px;width:16.10px;transform-origin:100% 0;transform:scaleX(1.0559);">1.4</div>
<div class="t" style="top:391.99px;font-size:11px;line-height:11px;letter-spacing:0.433px;color:#000;left:125.90px;transform-origin:0 0;transform:scaleX(1.0762);">010.01.13</div>
<div class="t" style="top:391.99px;font-size:11px;line-height:11px;letter-spacing:0.376px;color:#000;left:197.10px;transform-origin:0 0;transform:scaleX(1.0719);">Sonstige Reisekosten</div>
<div class="t" style="top:391.99px;font-size:11px;line-height:11px;color:#000;left:585.50px;transform-origin:0 0;transform:scaleX(1.2545);">x</div>
<div class="t" style="top:391.99px;font-size:11px;line-height:11px;letter-spacing:0.431px;color:#000;left:980.10px;transform-origin:0 0;transform:scaleX(1.0716);">Nach Aufwand</div>
<div class="t" style="top:391.99px;font-size:11px;line-height:11px;letter-spacing:0.416px;color:#000;left:1162.50px;transform-origin:0 0;transform:scaleX(1.0668);">VK aus EK</div>
<div class="t" style="top:412.19px;font-size:11px;line-height:11px;font-weight:bold;-webkit-text-stroke:0.25px #000;letter-spacing:1.267px;color:#000;left:634.00px;transform-origin:0 0;transform:scaleX(1.1563);">Tag</div>
<div class="r" style="left:50px;top:621px;width:1178px;height:16px;background:#f0f0f0"></div>
<div class="r" style="left:1228px;top:620px;width:16px;height:17px;background:#f0f0f0"></div>
<div class="r" style="left:67px;top:621px;width:162px;height:15px;background:#cdcdcd"></div>
<div class="r" style="left:49px;top:620px;width:1px;height:17px;background:#202020"></div>
<div class="r" style="left:45px;top:636px;width:5px;height:1px;background:#202020"></div>
<svg class="r" style="left:53px;top:624px;" width="9" height="10" viewBox="0 0 9 10"><path d="M6.5 1.5 L2.5 5 L6.5 8.5" stroke="#555" stroke-width="1.8" fill="none"/></svg>
<svg class="r" style="left:1215px;top:624px;" width="10" height="10" viewBox="0 0 10 10"><path d="M2.5 1.5 L6.5 5 L2.5 8.5" stroke="#404040" stroke-width="1.8" fill="none"/></svg>
<div class="t" style="top:663.99px;font-size:11px;line-height:11px;letter-spacing:0.395px;color:#1e1e1e;left:44.50px;transform-origin:0 0;transform:scaleX(1.0791);">Rabatt gepl.</div>
<div class="r" style="left:119px;top:662px;width:92px;height:16px;background:#ebebeb;border:1px solid #c2c2c2;box-sizing:border-box"></div>
<div class="t" style="top:663.99px;font-size:11px;line-height:11px;letter-spacing:0.314px;color:#000;left:159.01px;width:49.89px;transform-origin:100% 0;transform:scaleX(1.0483);">0,00 EUR</div>
<div class="r" style="left:214px;top:662px;width:57px;height:16px;background:#ebebeb;border:1px solid #c2c2c2;box-sizing:border-box"></div>
<div class="t" style="top:663.99px;font-size:11px;line-height:11px;letter-spacing:0.415px;color:#1e1e1e;left:273.50px;transform-origin:0 0;transform:scaleX(1.0829);">Rohertrag gepl.</div>
<div class="r" style="left:369px;top:662px;width:92px;height:16px;background:#ebebeb;border:1px solid #c2c2c2;box-sizing:border-box"></div>
<div class="t" style="top:663.99px;font-size:11px;line-height:11px;letter-spacing:0.314px;color:#000;left:409.01px;width:49.89px;transform-origin:100% 0;transform:scaleX(1.0483);">0,00 EUR</div>
<div class="r" style="left:464px;top:662px;width:56px;height:16px;background:#ebebeb;border:1px solid #c2c2c2;box-sizing:border-box"></div>
<div class="t" style="top:663.99px;font-size:11px;line-height:11px;letter-spacing:0.380px;color:#1e1e1e;left:522.50px;transform-origin:0 0;transform:scaleX(1.0708);">MwSt. gepl.</div>
<div class="r" style="left:594px;top:662px;width:91px;height:16px;background:#ebebeb;border:1px solid #c2c2c2;box-sizing:border-box"></div>
<div class="t" style="top:663.99px;font-size:11px;line-height:11px;letter-spacing:0.314px;color:#000;left:633.01px;width:49.89px;transform-origin:100% 0;transform:scaleX(1.0483);">0,00 EUR</div>
<div class="t" style="top:663.99px;font-size:11px;line-height:11px;letter-spacing:0.395px;color:#1e1e1e;left:690.50px;transform-origin:0 0;transform:scaleX(1.0725);">Umsatz gepl.</div>
<div class="r" style="left:769px;top:662px;width:106px;height:16px;background:#ebebeb;border:1px solid #c2c2c2;box-sizing:border-box"></div>
<div class="t" style="top:663.99px;font-size:11px;line-height:11px;letter-spacing:0.314px;color:#000;left:823.01px;width:49.89px;transform-origin:100% 0;transform:scaleX(1.0483);">0,00 EUR</div>
<div class="r" style="left:1257px;top:700px;width:17px;height:17px;background:#f0f0f0"></div>
<div class="r" style="left:1269px;top:707px;width:2px;height:2px;background:#a0a0a0"></div>
<div class="r" style="left:1266px;top:710px;width:2px;height:2px;background:#a0a0a0"></div>
<div class="r" style="left:1269px;top:710px;width:2px;height:2px;background:#a0a0a0"></div>
<div class="r" style="left:1263px;top:713px;width:2px;height:2px;background:#a0a0a0"></div>
<div class="r" style="left:1266px;top:713px;width:2px;height:2px;background:#a0a0a0"></div>
<div class="r" style="left:1269px;top:713px;width:2px;height:2px;background:#a0a0a0"></div>
</body></html>
